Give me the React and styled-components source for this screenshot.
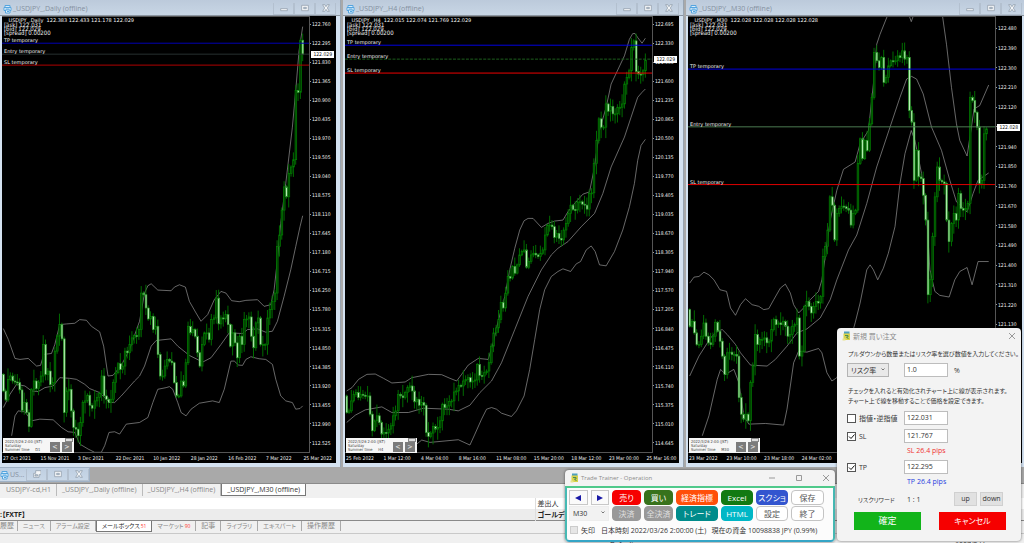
import React, { useState } from "react";
import styled, { createGlobalStyle } from "styled-components";

const GlobalStyle = createGlobalStyle`
  * {
    box-sizing: border-box;
  }

  body {
    margin: 0;
    background: #a9a9a9;
    font-family: "Open Sans", "Noto Sans CJK JP", sans-serif;
    font-size: 7px;
    font-feature-settings: "palt";
    color: #333;
  }

  button,
  input,
  select {
    font: inherit;
    font-feature-settings: inherit;
    color: inherit;
    margin: 0;
    padding: 0;
  }

  svg {
    flex: none;
  }
`;

const Desktop = styled.div`
  position: relative;
  display: flex;
  flex-direction: column;
  height: 100vh;
  overflow: hidden;
`;

/* chart windows */

const Charts = styled.div`
  display: grid;
  grid-template-columns: 343fr 343fr 338fr;
`;

const Window = styled.section`
  min-width: 0;
  padding: 0 ${(p) => (p.$last ? 2 : 4)}px 4px 2px;
  margin-right: ${(p) => (p.$last ? 0 : 2)}px;
  background: #d4e2f1;
  border-right: ${(p) => (p.$last ? "none" : "1px solid #98a4b1")};
`;

const TitleBar = styled.header`
  display: flex;
  align-items: center;
  gap: 1px;
  height: 16px;
  margin: 0 -4px 0 -2px;
  padding: 2px 4px 0 3px;
  background: linear-gradient(#bccadb, #c8d6e5);
  border-bottom: 1px solid #8b95a0;
`;

const Title = styled.h2`
  flex: 1;
  margin: 0;
  font-size: 7px;
  line-height: 10px;
  font-weight: 400;
  color: #8590a0;
  white-space: nowrap;
`;

const WindowButtons = styled.div`
  display: flex;
`;

const WindowButton = styled.button`
  display: flex;
  align-items: center;
  justify-content: center;
  width: 21px;
  height: 12px;
  background: transparent;
  border: 1px solid #b3c0cf;
  border-top: none;
`;

const ChartArea = styled.div`
  position: relative;
  display: grid;
  grid-template-columns: 308fr 26fr;
  background: #000;
  color: #f0f0f0;
  font-family: "DejaVu Sans Condensed", "DejaVu Sans", sans-serif;
  font-size: 5px;
  overflow: hidden;
`;

const Plot = styled.svg`
  display: block;
  width: 100%;
  height: 437px;
  border: solid #555;
  border-width: 1px 1px 1px 0;
`;

const PriceAxis = styled.ol`
  display: flex;
  flex-direction: column;
  justify-content: space-between;
  margin: 0;
  padding: ${(p) => p.$top}px 0 5px;
  list-style: none;
  line-height: 10px;
`;

const Price = styled.li`
  display: flex;
  align-items: center;
  gap: 1px;

  &::before {
    content: "";
    width: 1px;
    height: 1px;
    background: #999;
  }
`;

const CurrentPrice = styled.div`
  position: absolute;
  top: ${(p) => p.$y - 3}px;
  right: 2px;
  padding: 0 2px;
  background: #fff;
  color: #111;
  line-height: 7px;
`;

const TimeAxis = styled.ol`
  grid-column: 1 / -1;
  display: grid;
  grid-template-columns: repeat(9, 1fr);
  height: 10px;
  margin: 0 -5px 0 0;
  padding: 0 0 0 1px;
  list-style: none;
  line-height: 10px;
  white-space: nowrap;
`;

const TimeLabel = styled.li`
  min-width: 0;
`;

const Quote = styled.div`
  position: absolute;
  top: 2px;
  left: 4px;
  font-family: "DejaVu Sans", sans-serif;
  line-height: 5px;
  white-space: pre;
`;

const Spread = styled(Quote)`
  top: 7px;
  left: 2px;
  font-family: inherit;
  font-size: 6px;
  line-height: 4px;
`;

const LineLabel = styled.div`
  position: absolute;
  left: 2px;
  top: ${(p) => p.$y - 6}px;
  font-family: "DejaVu Sans", sans-serif;
  line-height: 6px;
`;

const ClockBox = styled.div`
  position: absolute;
  left: 1px;
  top: 422px;
  display: flex;
  justify-content: space-between;
  align-items: flex-end;
  width: 71px;
  height: 15px;
  padding: 0 2px 1px;
  background: #f6f6f6;
  color: #444;
  font-size: 4px;
  line-height: 4px;
  white-space: pre;
`;

const StepButtons = styled.div`
  display: flex;
  gap: 2px;
`;

const StepButton = styled.button`
  width: 10px;
  height: 10px;
  background: #7b7b7b;
  border: none;
  color: #eee;
  font-size: 7px;
  line-height: 8px;
`;

const CollapseButton = styled.button`
  position: absolute;
  top: 0;
  right: 1px;
  width: 8px;
  height: 4px;
  background: #ddd;
  border: 1px solid #888;
`;

/* terminal below the charts */

const MinimizedArea = styled.div`
  height: 16px;
`;

const MinimizedWindow = styled.div`
  display: flex;
  align-items: center;
  gap: 1px;
  width: 90px;
  height: 15px;
  background: linear-gradient(#bfcfe1, #c9d8e8);
  border: 1px solid #9fb1c5;
  border-left: none;
`;

const ChartTabs = styled.nav`
  display: flex;
  height: 15px;
  padding-left: 1px;
  background: #f0f0f0;
  border-top: 1px solid #8a8a8a;
`;

const ChartTab = styled.button`
  height: 12px;
  padding: 0 5px;
  background: ${(p) => (p.$active ? "#fff" : "transparent")};
  border: ${(p) => (p.$active ? "1px solid #777" : "none")};
  border-top: none;
  border-right: 1px solid ${(p) => (p.$active ? "#777" : "#bbb")};
  color: ${(p) => (p.$active ? "#333" : "#888")};
  white-space: nowrap;
`;

const MailTable = styled.table`
  width: 100%;
  border-collapse: collapse;
  background: #fff;
  line-height: 11px;
  text-align: left;

  th {
    height: 11px;
    font-weight: 400;
  }

  tbody tr {
    background: #ececec;
    border-bottom: 1px solid #8a8a8a;
  }

  td {
    height: 12px;
    font-weight: 700;
    color: #222;
  }

  th,
  td {
    padding: 0;
  }

  th + th,
  td + td {
    width: 489px;
    padding-left: 2px;
    border-left: 1px solid #ddd;
  }
`;

const TerminalTabs = styled.nav`
  display: flex;
  align-items: flex-start;
  height: 13px;
  background: #f0f0f0;
  border-bottom: 1px solid #c9c9c9;
`;

const TerminalTab = styled.button`
  height: ${(p) => (p.$active ? 11 : 10)}px;
  padding: 0 5px;
  background: ${(p) => (p.$active ? "#fff" : "transparent")};
  border: ${(p) => (p.$active ? "1px solid #777" : "none")};
  border-top: none;
  border-right: 1px solid ${(p) => (p.$active ? "#777" : "#aaa")};
  color: ${(p) => (p.$active ? "#222" : "#888")};
  font-size: ${(p) => (p.$kana ? 6 : 7)}px;
  line-height: 10px;
  white-space: nowrap;

  &:first-child {
    padding: 0 3px 0 0;
  }
`;

const Count = styled.small`
  margin-left: 1px;
  color: #f33;
  font-size: 5px;
`;

const StatusBar = styled.footer`
  display: grid;
  grid-template-columns: 610fr 345fr 69fr;
  flex: 1;
  min-height: 9px;
  padding-top: 6px;
  background: #f0f0f0;
  line-height: 9px;
  overflow: hidden;
`;

/* floating dialogs */

const Panel = styled.section`
  position: absolute;
  left: ${(p) => p.$x}px;
  top: ${(p) => p.$y}px;
  width: ${(p) => p.$w}px;
  background: #f3f3f3;
  border-radius: 4px;
  box-shadow: 0 0 3px rgba(0, 0, 0, 0.55);
  overflow: hidden;
`;

const PanelTitle = styled.header`
  display: flex;
  align-items: center;
  gap: 2px;
  height: 16px;
  padding: 0 5px;
  color: #8c8c8c;

  h2 {
    flex: 1;
    margin: 0;
    font-size: ${(p) => (p.$latin ? 6 : 7)}px;
    font-weight: 400;
  }
`;

const IconButton = styled.button`
  display: flex;
  width: 8px;
  height: 8px;
  margin-left: ${(p) => (p.$spaced ? 17 : 0)}px;
  background: none;
  border: none;

  svg {
    width: 8px;
    height: 8px;
  }
`;

const OperationBody = styled.div`
  padding: 2px;
  border: 2px solid #46b9b4;
  border-top-color: #4fc98a;
  border-bottom-color: #35a5c6;
  border-radius: 0 0 4px 4px;
  background: #fcfcfc;
`;

const ButtonGrid = styled.div`
  display: grid;
  grid-template-columns: 40px 29px 29px 42px 32px 32px 33px;
  grid-auto-rows: 15px;
  gap: 1px 3px;
`;

const Arrows = styled.div`
  display: flex;
  gap: 3px;
`;

const ArrowButton = styled.button`
  display: flex;
  align-items: center;
  justify-content: center;
  flex: 1;
  background: #fafafa;
  border: 1px solid #c8c8c8;
`;

const ActionButton = styled.button`
  background: ${(p) => p.$color || "#fff"};
  border: 1px solid ${(p) => p.$color || "#c4c4c4"};
  border-radius: 4px;
  color: ${(p) => p.$text || (p.$color ? "#fff" : "#555")};
  font-size: 8px;
  line-height: 12px;
  white-space: nowrap;
`;

const SelectBox = styled.div`
  position: relative;
  display: flex;
  justify-self: start;

  svg {
    position: absolute;
    right: 4px;
    top: 5px;
    width: 4px;
    height: 3px;
    pointer-events: none;
  }
`;

const Select = styled.select`
  appearance: none;
  width: ${(p) => (p.$raised ? 42 : 40)}px;
  height: ${(p) => (p.$raised ? 14 : 15)}px;
  padding-left: 3px;
  background: ${(p) => (p.$raised ? "#e9e9e9" : "#f2f2f2")};
  border: 1px solid ${(p) => (p.$raised ? "#b4b4b4" : "#ededed")};
  border-radius: 0;
`;

const StatusLine = styled.div`
  display: flex;
  align-items: center;
  height: 17px;
  padding-left: 1px;
  white-space: nowrap;

  label {
    display: flex;
    align-items: center;
    gap: 3px;
    margin-right: 6px;
  }

  span + span {
    margin-left: 5px;
  }
`;

const CheckBox = styled.input`
  appearance: none;
  width: ${(p) => (p.$pale ? 8 : 9)}px;
  height: ${(p) => (p.$pale ? 8 : 9)}px;
  background: ${(p) => (p.$pale ? "#e6e6e6" : "#fff")};
  border: 1px solid ${(p) => (p.$pale ? "#ccc" : "#555")};
`;

const TickHolder = styled.span`
  position: relative;
  display: flex;

  svg {
    position: absolute;
    inset: 0;
    pointer-events: none;
  }
`;

const OrderForm = styled.form`
  padding: 5px 11px 11px 10px;
`;

const Note = styled.p`
  margin: 0;
  padding-left: 1px;
  font-size: 6px;
  line-height: 10px;
  white-space: nowrap;
`;

const Notes = styled.div`
  margin-top: 10px;
`;

const Row = styled.div`
  display: grid;
  grid-template-columns: 57px 44px 1fr;
  align-items: center;
  height: 13px;
  margin-top: ${(p) => p.$gap || 0}px;

  label {
    display: flex;
    align-items: center;
    gap: 3px;
    white-space: nowrap;
  }
`;

const TextInput = styled.input`
  width: 44px;
  height: 14px;
  padding: 0 2px 2px;
  background: #fff;
  border: 1px solid #bdbdbd;
`;

const Unit = styled.span`
  padding-left: 6px;
`;

const Pips = styled.p`
  margin: 0 0 0 60px;
  height: 18px;
  line-height: 18px;
  color: ${(p) => p.$color};
`;

const Ratio = styled.div`
  display: flex;
  align-items: center;
  height: 14px;
  margin-top: 1px;
  padding: 0 7px 0 11px;
`;

const RatioName = styled.span`
  width: 49px;
  font-size: 6px;
`;

const SmallButton = styled.button`
  width: 23px;
  height: 14px;
  margin-left: ${(p) => (p.$first ? "auto" : "3px")};
  background: #e1e1e1;
  border: 1px solid #d0d0d0;
  line-height: 10px;
`;

const Actions = styled.div`
  display: flex;
  justify-content: space-between;
  margin-top: 6px;
  padding: 0 4px 0 7px;
`;

const SubmitButton = styled.button`
  width: 67px;
  height: 18px;
  background: ${(p) => p.$color};
  border: none;
  color: #fff;
  font-size: ${(p) => p.$size}px;
  line-height: 16px;
`;

// Prices are plotted in thirds of a pixel, y growing downwards.
const TOP = -642;

const charts = [
  {
    title: "_USDJPY_,Daily (offline)",
    quote: "_USDJPY_,Daily  122.383 122.433 121.178 122.029",
    period: "D1",
    current: "122.029",
    currentY: 38,
    axisTop: 3,
    x0: 6,
    bars: [10, 911],
    levels: [
      { name: "TP temporary", y: 27, color: "#0000b4" },
      { name: "Entry temporary", y: 38, color: "#26302f" },
      { name: "SL temporary", y: 49, color: "#b00000" },
    ],
    prices: [
      "122.760", "122.295", "121.830", "121.365", "120.900", "120.435", "119.970", "119.505",
      "119.040", "118.575", "118.110", "117.645", "117.180", "116.715", "116.250", "115.780",
      "115.315", "114.850", "114.385", "113.920", "113.455", "112.990", "112.525",
    ],
    times: [
      "27 Oct 2021", "15 Nov 2021", "3 Dec 2021", "22 Dec 2021", "10 Jan 2022", "28 Jan 2022",
      "16 Feb 2022", "7 Mar 2022", "25 Mar 2022",
    ],
    closes: [
      485, 512, 450, 440, 455, 458, 460, 482, 543, 520, 550, 592, 480, 455, 478, 458, 440, 345, 435,
      425, 466, 460, 365, 320, 285, 328, 550, 485, 480, 545, 595, 600, 620, 580, 520, 515, 498, 528,
      537, 515, 505, 492, 440, 500, 510, 520, 510, 460, 430, 403, 420, 410, 365, 370, 345, 325, 318,
      320, 300, 190, 195, 235, 268, 260, 300, 290, 375, 440, 440, 410, 390, 395, 400, 460, 500, 500,
      455, 470, 400, 290, 310, 300, 320, 370, 410, 345, 310, 310, 330, 270, 265, 205, 283, 265, 268,
      255, 285, 350, 310, 340, 385, 320, 345, 270, 268, 262, 320, 355, 280, 265, 345, 345, 345, 265,
      240, 215, 190, 50, 15, -60, -130, -100, -170, -190, -212, -420, -415, -572, -530,
    ],
    bands: [
      "10,297 25,330 45,387 60,390 85,387 110,410 122,408 132,375 155,372 165,345 180,285 200,283 225,281 240,270 260,272 275,290 300,307 312,350 325,440 340,438 365,408 390,360 420,275 435,190 445,168 455,162 475,181 515,183 525,172 540,165 558,172 570,215 590,250 605,275 625,255 645,210 665,185 680,190 697,213 720,216 740,212 775,210 795,230 815,225 825,180 835,90 845,-20 860,-140 880,-310 890,-420 900,-540 911,-613",
      "10,535 30,495 50,465 75,470 95,485 115,487 135,475 160,470 180,445 210,447 230,450 255,465 270,478 300,490 330,520 345,520 365,500 405,455 420,440 435,410 455,350 470,333 515,328 535,350 570,378 610,398 635,385 665,345 690,310 730,312 745,300 775,298 800,308 820,305 835,275 855,200 875,120 890,50 903,-10 911,-43",
      "35,620 45,560 55,545 75,548 95,575 120,570 160,572 185,595 205,608 225,610 240,645 265,660 285,670 305,670 315,650 328,610 345,608 360,615 380,585 420,580 445,565 460,520 475,480 500,475 510,472 520,480 535,520 545,550 560,560 575,540 600,522 640,515 660,520 675,480 695,395 705,395 718,407 730,408 740,390 755,382 780,388 800,390 820,405 830,450 845,500 860,515 880,520 890,540 903,538 911,530",
    ],
  },
  {
    title: "_USDJPY_,H4 (offline)",
    quote: "_USDJPY_,H4  122.015 122.074 121.769 122.029",
    period: "H4",
    current: "122.029",
    currentY: 43,
    axisTop: 3,
    x0: 9,
    bars: [14, 913],
    levels: [
      { name: "TP temporary", y: 29, color: "#0000e0" },
      { name: "Entry temporary", y: 43, color: "#1d5f1d", dash: "9 4" },
      { name: "SL temporary", y: 57, color: "#f00000" },
    ],
    prices: [
      "122.695", "122.330", "121.965", "121.600", "121.235", "120.865", "120.500", "120.135",
      "119.770", "119.405", "119.035", "118.670", "118.305", "117.940", "117.570", "117.205",
      "116.840", "116.475", "116.110", "115.740", "115.375", "115.010", "114.645",
    ],
    times: [
      "25 Feb 2022", "1 Mar 12:00", "4 Mar 04:00", "8 Mar 16:00", "11 Mar 08:00", "15 Mar 20:00",
      "18 Mar 12:00", "23 Mar 00:00", "25 Mar 16:00",
    ],
    closes: [
      550, 545, 515, 495, 490, 505, 495, 498, 500, 500, 555, 605, 575, 560, 580, 615, 610, 612, 600,
      590, 560, 545, 495, 500, 505, 490, 475, 470, 485, 518, 510, 528, 520, 528, 610, 622, 612, 592,
      600, 595, 575, 525, 535, 530, 517, 515, 488, 485, 468, 470, 455, 450, 445, 458, 455, 452, 405,
      438, 440, 430, 425, 400, 350, 310, 295, 270, 218, 235, 190, 140, 145, 110, 130, 105, 75, 65,
      60, 112, 95, 75, 70, 75, 80, 70, 60, 15, -15, -15, -10, 22, 10, 25, 30, 0, -20, -50, -75, -62,
      -60, -85, -85, -78, -75, -63, -110, -112, -200, -270, -335, -310, -310, -380, -358, -372, -350,
      -350, -370, -370, -380, -440, -460, -480, -550, -570, -478, -470, -468, -480, -512,
    ],
    bands: [
      "14,485 30,475 50,450 75,435 100,434 125,447 150,461 190,458 210,445 260,435 300,436 325,447 345,455 360,435 380,407 410,387 440,390 455,340 470,275 490,200 505,120 520,55 535,0 548,-28 560,-35 575,-35 600,-8 620,-20 640,-27 665,-30 680,-55 700,-80 725,-108 745,-115 760,-190 775,-300 795,-370 810,-440 850,-525 865,-575 875,-592 882,-592 890,-580 903,-563 913,-578",
      "14,580 40,558 70,542 120,533 150,550 200,550 245,537 320,540 350,545 385,528 415,490 450,455 480,400 520,300 560,200 600,120 630,75 650,55 680,35 720,-10 760,-50 785,-110 810,-190 850,-280 870,-340 890,-400 903,-415 913,-425",
      "225,645 240,633 265,640 350,632 385,648 400,615 420,570 435,540 450,535 465,540 480,552 510,562 525,545 548,500 565,420 580,330 595,240 610,180 630,140 650,125 665,117 688,125 705,102 718,95 735,60 750,48 762,65 775,105 795,108 820,65 845,0 865,-70 880,-140 890,-210 900,-255 913,-273",
    ],
  },
  {
    title: "_USDJPY_,M30 (offline)",
    quote: "_USDJPY_,M30  122.028 122.028 122.028 122.028",
    period: "M30",
    current: "122.028",
    currentY: 111,
    axisTop: 7,
    x0: 12,
    bars: [17, 910],
    levels: [
      { name: "TP temporary", y: 53, color: "#0000e0" },
      { name: "Entry temporary", y: 111, color: "#4c7a52" },
      { name: "SL temporary", y: 169, color: "#e00000" },
    ],
    prices: [
      "122.480", "122.390", "122.300", "122.210", "122.120", "122.030", "121.940", "121.850",
      "121.760", "121.670", "121.580", "121.490", "121.400", "121.310", "121.220", "121.130",
      "121.040", "120.950", "120.860", "120.770", "120.680", "120.590",
    ],
    times: [
      "23 Mar 2022", "23 Mar 10:00", "23 Mar 18:00", "24 Mar 02:00", "24 Mar 10:00", "24 Mar 18:00",
      "25 Mar 02:00", "25 Mar 10:00", "25 Mar 18:00",
    ],
    closes: [
      290, 275, 310, 345, 345, 320, 280, 320, 340, 345, 320, 278, 305, 335, 380, 435, 370, 368, 375,
      375, 380, 505, 555, 570, 555, 575, 460, 410, 315, 345, 330, 330, 325, 340, 335, 300, 270, 285,
      280, 285, 275, 290, 320, 315, 290, 285, 265, 380, 365, 230, 215, 230, 250, 230, 215, 220, 200,
      80, 50, 0, -100, -75, 30, -50, -65, -72, -70, -65, -60, -15, -50, -60, -200, -275, -215, -270,
      -240, -320, -400, -535, -510, -490, -520, -445, -460, -495, -510, -508, -510, -525, -520, -540,
      -515, -520, -360, -325, -150, -240, -160, -155, -105, -30, 195, 150, 20, -100, -190, -150,
      -145, -140, -30, 35, -20, -50, -30, -110, -65, -60, -65, -80, -400, -390, -355, -310, -140,
      -150, -290, -305,
    ],
    bands: [
      "17,160 30,142 45,140 60,127 75,135 90,150 108,180 128,185 140,235 155,257 170,225 185,207 205,225 225,230 240,240 255,237 270,210 290,175 305,163 320,190 330,225 345,250 360,235 380,210 405,185 415,150 425,80 440,-30 460,-120 480,-183 515,-205 530,-260 555,-300 570,-440 580,-560 590,-590 612,-645 678,-645 684,-628 690,-645 778,-645 790,-560 805,-430 820,-320 830,-270 852,-223 865,-310 873,-365 890,-375 917,-437",
      "17,440 45,380 80,325 100,305 115,300 130,315 155,345 170,370 200,407 250,410 275,390 310,350 340,310 370,298 410,265 440,210 460,150 495,60 520,15 550,-80 580,-190 620,-310 650,-400 670,-455 685,-463 700,-455 720,-410 745,-310 775,-240 800,-150 820,-85 852,-55 870,-110 885,-150 917,-172",
      "55,620 75,560 100,450 110,420 125,435 150,420 165,460 180,560 195,585 245,583 300,588 310,540 330,400 345,365 370,368 405,357 415,370 430,430 445,455 460,445 490,370 515,280 530,220 550,120 560,105 570,120 583,150 600,115 615,70 635,-10 650,-140 665,-230 684,-300 695,-270 715,-170 730,-50 740,120 755,185 770,197 798,202 815,150 830,125 852,113 867,165 885,95 917,95",
    ],
  },
];

const wick = (i, seed) => Math.round(4 + 30 * Math.abs(Math.sin(i * seed) * Math.cos(i * 1.7)));

const Candles = ({ closes, bars }) => {
  const step = (bars[1] - bars[0]) / (closes.length - 1);
  return closes.map((close, i) => {
    const open = i ? closes[i - 1] : close - 50;
    const x = Math.round(bars[0] + i * step);
    const top = Math.min(open, close);
    const height = Math.max(3, Math.abs(open - close));
    const falling = close > open;
    return (
      <g key={i}>
        <path
          d={`M${x} ${top - wick(i, 2.3)}V${top + height + wick(i, 3.1)}`}
          stroke="#006c00"
          strokeWidth="3"
        />
        <rect
          x={x - 2}
          y={top}
          width="5"
          height={height}
          fill={falling ? "#c4f5c0" : "#003c00"}
          stroke={falling ? "#2c9a2c" : "#008000"}
          strokeWidth="2"
        />
      </g>
    );
  });
};

const ChartIcon = () => (
  <svg width="9" height="10" viewBox="0 0 18 20" fill="none" stroke="#55a5df" strokeWidth="2">
    <path d="M4 8V3h10v5" fill="#d9ecfb" />
    <path d="M2 7h14v6H2z" fill="#eaf5fd" />
    <path d="M5 12h9v6H5z" fill="#eaf5fd" />
    <path d="M5 10h8M8 15h4" />
  </svg>
);

const TrainerIcon = () => (
  <svg width="9" height="10" viewBox="0 0 18 20">
    <path d="M4 1h11v5H4z" fill="#4f9fbd" />
    <path d="M3 5h13v13H3z" fill="#d9d34a" />
    <path d="M6 9h6v3H9l4 4" fill="none" stroke="#4c8a54" strokeWidth="2" />
    <path d="M1 15h6v4H1z" fill="#e7e28b" />
  </svg>
);

const glyphs = {
  minimize: <path d="M1 7h10v3H1z" />,
  restore: <path d="M1 2h10v8H1zM4 5h4v2H4z" fillRule="evenodd" />,
  cascade: <path d="M4 1h8v6H9v4H1V5h3zM3 7v2h4V7z" fillRule="evenodd" />,
  close: <path d="M1 1h3l2 3 2-3h3L8 6l3 5H8L6 8l-2 3H1l3-5z" />,
};

const Glyph = ({ name }) => (
  <svg width="8" height="8" viewBox="0 0 12 12" fill="#f4f6f8" stroke="#8794a2">
    {glyphs[name]}
  </svg>
);

const Chevron = () => (
  <svg viewBox="0 0 8 6" fill="none" stroke="#777" strokeWidth="2">
    <path d="M1 1l3 3 3-3" />
  </svg>
);

const Cross = () => (
  <svg viewBox="0 0 16 16" stroke="#999" strokeWidth="2">
    <path d="M2 2l12 12M14 2L2 14" />
  </svg>
);

const ChartWindow = ({ chart, last }) => (
  <Window $last={last}>
    <TitleBar>
      <ChartIcon />
      <Title>{chart.title}</Title>
      <WindowButtons>
        {["minimize", "restore", "close"].map((name) => (
          <WindowButton key={name} aria-label={name}>
            <Glyph name={name} />
          </WindowButton>
        ))}
      </WindowButtons>
    </TitleBar>
    <ChartArea>
      <Plot viewBox={`${chart.x0} ${TOP} 924 1311`} preserveAspectRatio="none">
        {chart.bands.map((points) => (
          <polyline key={points} points={points} fill="none" stroke="#9c9c9c" strokeWidth="2" />
        ))}
        <Candles closes={chart.closes} bars={chart.bars} />
        {chart.levels.map(({ name, y, color, dash }) => (
          <path
            key={name}
            d={`M${chart.x0} ${TOP + y * 3 - 2}h924`}
            stroke={color}
            strokeWidth="3"
            strokeDasharray={dash}
          />
        ))}
      </Plot>
      <PriceAxis $top={chart.axisTop}>
        {chart.prices.map((price) => (
          <Price key={price}>{price}</Price>
        ))}
      </PriceAxis>
      <TimeAxis>
        {chart.times.map((time) => (
          <TimeLabel key={time}>{time}</TimeLabel>
        ))}
      </TimeAxis>
      <CurrentPrice $y={chart.currentY}>{chart.current}</CurrentPrice>
      <Quote>{chart.quote}</Quote>
      <Spread>{"[ask] 122.031\n[bid] 122.029\n[spread] 0.00200"}</Spread>
      {chart.levels.map(({ name, y }) => (
        <LineLabel key={name} $y={y}>
          {name}
        </LineLabel>
      ))}
      <ClockBox>
        {`2022/3/26 2:00 (JST)\nSaturday\nSummer time     ${chart.period}`}
        <StepButtons>
          <StepButton>&lt;</StepButton>
          <StepButton>&gt;</StepButton>
        </StepButtons>
        <CollapseButton aria-label="collapse" />
      </ClockBox>
    </ChartArea>
  </Window>
);

const chartTabs = [
  "USDJPY-cd,H1",
  "_USDJPY_,Daily (offline)",
  "_USDJPY_,H4 (offline)",
  "_USDJPY_,M30 (offline)",
];

const terminalTabs = [
  { name: "履歴" },
  { name: "ニュース", kana: true },
  { name: "アラーム設定", kana: true },
  { name: "メールボックス", kana: true, count: 51, active: true },
  { name: "マーケット", kana: true, count: 90 },
  { name: "記事" },
  { name: "ライブラリ", kana: true },
  { name: "エキスパート", kana: true },
  { name: "操作履歴" },
];

const Terminal = () => (
  <>
    <MinimizedArea>
      <MinimizedWindow>
        <ChartIcon />
        <Title>US...</Title>
        <WindowButtons>
          {["cascade", "restore", "close"].map((name) => (
            <WindowButton key={name} aria-label={name}>
              <Glyph name={name} />
            </WindowButton>
          ))}
        </WindowButtons>
      </MinimizedWindow>
    </MinimizedArea>
    <ChartTabs>
      {chartTabs.map((name, i) => (
        <ChartTab key={name} $active={i === 3}>
          {name}
        </ChartTab>
      ))}
    </ChartTabs>
    <MailTable>
      <thead>
        <tr>
          <th />
          <th>差出人</th>
        </tr>
      </thead>
      <tbody>
        <tr>
          <td>:【FXTF】</td>
          <td>ゴールデン</td>
        </tr>
      </tbody>
    </MailTable>
    <TerminalTabs>
      {terminalTabs.map(({ name, kana, count, active }) => (
        <TerminalTab key={name} $kana={kana} $active={active}>
          {name}
          {count && <Count>{count}</Count>}
        </TerminalTab>
      ))}
    </TerminalTabs>
    <StatusBar>
      <span />
      <span>Default</span>
      <span>6007/2 kb</span>
    </StatusBar>
  </>
);

const OperationPanel = () => (
  <Panel $x={565} $y={470} $w={270}>
    <PanelTitle $latin>
      <TrainerIcon />
      <h2>Trade Trainer - Operation</h2>
      <IconButton aria-label="minimize">
        <svg viewBox="0 0 16 16" stroke="#999" strokeWidth="2">
          <path d="M2 8h12" />
        </svg>
      </IconButton>
      <IconButton aria-label="maximize" $spaced>
        <svg viewBox="0 0 16 16" fill="none" stroke="#999" strokeWidth="2">
          <path d="M3 3h10v10H3z" />
        </svg>
      </IconButton>
      <IconButton aria-label="close" $spaced>
        <Cross />
      </IconButton>
    </PanelTitle>
    <OperationBody>
      <ButtonGrid>
        <Arrows>
          <ArrowButton aria-label="back">
            <svg width="6" height="6" viewBox="0 0 6 6" fill="#1a1aa6">
              <path d="M6 0v6L0 3z" />
            </svg>
          </ArrowButton>
          <ArrowButton aria-label="forward">
            <svg width="6" height="6" viewBox="0 0 6 6" fill="#1a1aa6">
              <path d="M0 0v6l6-3z" />
            </svg>
          </ArrowButton>
        </Arrows>
        <ActionButton $color="#f60000">売り</ActionButton>
        <ActionButton $color="#37721c">買い</ActionButton>
        <ActionButton $color="#ff4f0a">経済指標</ActionButton>
        <ActionButton $color="#127a12">Excel</ActionButton>
        <ActionButton $color="#3355cf">スクショ</ActionButton>
        <ActionButton>保存</ActionButton>
        <SelectBox>
          <Select aria-label="時間足">
            <option>M30</option>
          </Select>
          <Chevron />
        </SelectBox>
        <ActionButton $color="#999" $text="#dedede">
          決済
        </ActionButton>
        <ActionButton $color="#999" $text="#dedede">
          全決済
        </ActionButton>
        <ActionButton $color="#008b8b">トレード</ActionButton>
        <ActionButton $color="#00b7c6">HTML</ActionButton>
        <ActionButton>設定</ActionButton>
        <ActionButton>終了</ActionButton>
      </ButtonGrid>
      <StatusLine>
        <label>
          <CheckBox type="checkbox" $pale />
          矢印
        </label>
        <span>日本時刻 2022/03/26 2:00:00 (土)</span>
        <span>現在の資金 10098838 JPY (0.99%)</span>
      </StatusLine>
    </OperationBody>
  </Panel>
);

const Tick = ({ checked, onChange }) => (
  <TickHolder>
    <CheckBox type="checkbox" checked={checked} onChange={onChange} />
    {checked && (
      <svg width="9" height="9" viewBox="0 0 18 18" fill="none" stroke="#111" strokeWidth="2">
        <path d="M4 9l4 4 7-8" />
      </svg>
    )}
  </TickHolder>
);

const OrderPanel = () => {
  const [enabled, setEnabled] = useState({ limit: false, sl: true, tp: true });
  const toggle = (key) => setEnabled({ ...enabled, [key]: !enabled[key] });

  return (
    <Panel $x={837} $y={328} $w={184}>
      <PanelTitle>
        <TrainerIcon />
        <h2>新規 買い注文</h2>
        <IconButton aria-label="close">
          <Cross />
        </IconButton>
      </PanelTitle>
      <OrderForm onSubmit={(e) => e.preventDefault()}>
        <Note>プルダウンから数量またはリスク率を選び数値を入力してください。</Note>
        <Row $gap={4}>
          <SelectBox>
            <Select $raised aria-label="数量の種類">
              <option>リスク率</option>
            </Select>
            <Chevron />
          </SelectBox>
          <TextInput defaultValue="1.0" aria-label="リスク率" />
          <Unit>%</Unit>
        </Row>
        <Notes>
          <Note>チェックを入れると有効化されチャート上に線が表示されます。</Note>
          <Note>チャート上で線を移動することで価格を設定できます。</Note>
        </Notes>
        <Row $gap={5}>
          <label>
            <Tick checked={enabled.limit} onChange={() => toggle("limit")} />
            指値・逆指値
          </label>
          <TextInput defaultValue="122.031" aria-label="指値・逆指値" />
        </Row>
        <Row $gap={5}>
          <label>
            <Tick checked={enabled.sl} onChange={() => toggle("sl")} />
            SL
          </label>
          <TextInput defaultValue="121.767" aria-label="SL" />
        </Row>
        <Pips $color="#f03030">SL 26.4 pips</Pips>
        <Row>
          <label>
            <Tick checked={enabled.tp} onChange={() => toggle("tp")} />
            TP
          </label>
          <TextInput defaultValue="122.295" aria-label="TP" />
        </Row>
        <Pips $color="#1f3fe0">TP 26.4 pips</Pips>
        <Ratio>
          <RatioName>リスクリワード</RatioName>
          <span>1 : 1</span>
          <SmallButton type="button" $first>
            up
          </SmallButton>
          <SmallButton type="button">down</SmallButton>
        </Ratio>
        <Actions>
          <SubmitButton $color="#12b41a" $size={9}>
            確定
          </SubmitButton>
          <SubmitButton type="button" $color="#f60000" $size={8}>
            キャンセル
          </SubmitButton>
        </Actions>
      </OrderForm>
    </Panel>
  );
};

const App = () => (
  <>
    <GlobalStyle />
    <Desktop>
      <Charts>
        {charts.map((chart, i) => (
          <ChartWindow key={chart.title} chart={chart} last={i === 2} />
        ))}
      </Charts>
      <Terminal />
      <OperationPanel />
      <OrderPanel />
    </Desktop>
  </>
);

export default App;
